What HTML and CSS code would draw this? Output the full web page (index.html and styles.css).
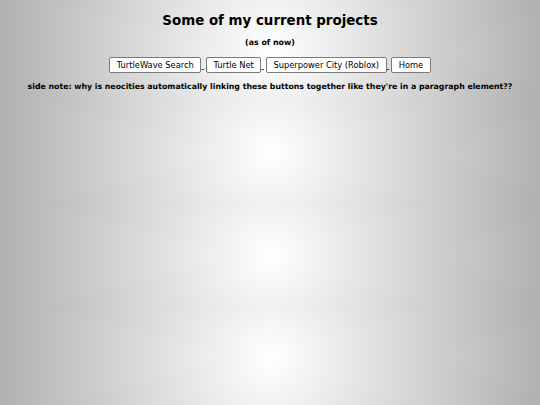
FILE: index.html
```html
<!DOCTYPE html>
<html>
<head>
<meta charset="utf-8">
<title>Projects</title>
<link rel="stylesheet" href="styles.css">
</head>
<body>
<h1 class="title">Some of my current projects</h1>
<p class="sub">(as of now)</p>
<div class="links"><a class="proj" href="#"><button class="btn">TurtleWave Search</button> </a><a class="proj" href="#"><button class="btn">Turtle Net</button> </a><a class="proj" href="#"><button class="btn">Superpower City (Roblox)</button> </a><a class="proj last" href="#"><button class="btn">Home</button></a></div>
<p class="note">side note: why is neocities automatically linking these buttons together like they're in a paragraph element??</p>
</body>
</html>
```
FILE: styles.css
```css
html {
  background: radial-gradient(circle farthest-corner, #ffffff 0%, #b0b0b0 100%);
  background-size: 100% 102px;
  background-repeat: repeat;
  min-height: 100%;
}
body {
  margin: 0;
  font-family: "DejaVu Sans", Verdana, sans-serif;
  color: #000;
  text-align: center;
}
.title {
  margin: 13px 0 0;
  font-size: 13.4px;
  line-height: 16px;
  font-weight: bold;
}
.sub {
  margin: 9px 0 0;
  font-size: 7.9px;
  line-height: 10px;
  font-weight: bold;
}
.links {
  margin: 9px 0 0;
  font-size: 8.2px;
  line-height: 16px;
  height: 16px;
}
.proj {
  color: #4a3aa0;
  text-decoration: underline;
  margin-right: 2px;
}
.proj.last {
  margin-right: 0;
}
.btn {
  font-family: "DejaVu Sans", Verdana, sans-serif;
  font-size: 8.3px;
  line-height: 10px;
  height: 16px;
  padding: 0 6.5px;
  margin: 0;
  background: #fff;
  color: #000;
  border: 1px solid #7a7a7a;
  border-radius: 2px;
  vertical-align: top;
}
.note {
  margin: 9px 0 0;
  font-size: 7.8px;
  line-height: 10px;
  font-weight: bold;
}
```
